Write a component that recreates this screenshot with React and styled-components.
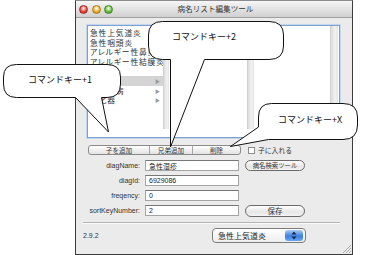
import { Fragment } from 'react';
import styled, { createGlobalStyle } from 'styled-components';

const GlobalStyle = createGlobalStyle`
  html, body {
    margin: 0;
    background: #fff;
  }
  body {
    font-family: "Liberation Sans", "Noto Sans CJK JP", sans-serif;
    color: #222;
  }
`;

const jp = `"Noto Sans CJK JP", "Liberation Sans", sans-serif`;

const Stage = styled.div`
  position: relative;
  width: 371px;
  height: 255px;
  padding-left: 75px;
  box-sizing: border-box;
  overflow: hidden;
`;

const Window = styled.div`
  width: 278px;
  height: 255px;
  box-sizing: border-box;
  border: 1px solid #3c3c3c;
  border-top-color: #8c8c8c;
  background: #ebebeb;
  display: flex;
  flex-direction: column;
`;

const TitleBar = styled.div`
  height: 16px;
  display: grid;
  grid-template-columns: 1fr auto 1fr;
  align-items: center;
  background: linear-gradient(#f6f6f6, #d0d0d0);
  border-bottom: 1px solid #a0a0a0;
  padding-left: 3px;
`;

const Lights = styled.div`
  display: flex;
  gap: 3.5px;
`;

const Light = styled.span`
  width: 9px;
  height: 9px;
  border-radius: 50%;
  box-sizing: border-box;
  border: 1px solid ${p => p.$edge};
  background: radial-gradient(circle at 50% 35%, #fff 0, ${p => p.$color} 55%, ${p => p.$edge} 100%);
`;

const Title = styled.div`
  font-family: ${jp};
  font-size: 7.6px;
  color: #333;
  line-height: 1;
`;

const Body = styled.div`
  flex: 1;
  display: flex;
  flex-direction: column;
  padding: 7px 12px 0 11px;
  position: relative;
`;

const ListBox = styled.div`
  height: 113px;
  box-sizing: border-box;
  border: 1px solid #7d9fcc;
  box-shadow: 0 0 0 1px #c4d7ef;
  background: #fff;
`;

const Columns = styled.div`
  display: flex;
  height: 103px;
`;

const Column = styled.div`
  width: ${p => p.$w}px;
  display: flex;
`;

const ColumnList = styled.div`
  flex: 1;
  min-width: 0;
  padding-top: 2px;
  overflow: hidden;
`;

const Scroller = styled.div`
  width: ${p => p.$w}px;
  background: linear-gradient(90deg, #dcdcdc, #f2f2f2 60%, #e4e4e4);
  border-left: 1px solid #d0d0d0;
`;

const Row = styled.div`
  height: 9.6px;
  display: flex;
  align-items: center;
  justify-content: space-between;
  padding: 0 3px 0 2px;
  font-family: ${jp};
  font-size: 7.8px;
  font-feature-settings: "palt";
  letter-spacing: 0.8px;
  line-height: 9px;
  color: #333;
  white-space: nowrap;
  overflow: hidden;
  background: ${p => (p.$selected ? '#d4d4d4' : 'transparent')};
`;

const Arrow = styled.span`
  font-size: 5px;
  letter-spacing: 0;
  color: #9a9a9a;
`;

const Toolbar = styled.div`
  margin-top: 7px;
  display: flex;
  align-items: center;
  height: 10px;
`;

const Segmented = styled.div`
  display: flex;
  height: 10px;
  box-sizing: border-box;
  border: 1px solid #8a8a8a;
  border-radius: 3px;
  background: linear-gradient(#ffffff, #e2e2e2);
  margin-left: 1px;
`;

const Segment = styled.div`
  width: ${p => p.$w}px;
  display: flex;
  align-items: center;
  justify-content: center;
  font-family: ${jp};
  font-size: 6.6px;
  color: #333;
  & + & {
    border-left: 1px solid #a8a8a8;
  }
`;

const Check = styled.label`
  display: flex;
  align-items: center;
  gap: 3px;
  margin-left: 7px;
  font-family: ${jp};
  font-size: 6.8px;
  color: #333;
`;

const Box = styled.span`
  width: 7px;
  height: 7px;
  box-sizing: border-box;
  border: 1px solid #8c8c8c;
  background: #fff;
`;

const Form = styled.div`
  margin-top: 4px;
  margin-left: -5px;
  display: grid;
  grid-template-columns: 58px 94px 61px;
  grid-auto-rows: 13px;
  column-gap: 5px;
  row-gap: 2px;
  align-items: center;
`;

const Label = styled.div`
  text-align: right;
  font-size: 7px;
  color: #333;
  white-space: nowrap;
`;

const Field = styled.div`
  height: 11px;
  box-sizing: border-box;
  border: 1px solid #a4a4a4;
  border-top-color: #777;
  background: #fff;
  padding-left: 3px;
  display: flex;
  align-items: center;
  font-family: "Liberation Sans", "Noto Sans CJK JP", sans-serif;
  font-size: 7px;
  color: #222;
`;

const Pill = styled.div`
  margin-left: 1px;
  height: ${p => p.$h}px;
  box-sizing: border-box;
  border: 1px solid #6a6a6a;
  border-radius: 7px;
  background: linear-gradient(#ffffff, #e6e6e6 60%, #f4f4f4);
  display: flex;
  align-items: center;
  justify-content: center;
  font-family: ${jp};
  font-size: ${p => p.$fs}px;
  color: #333;
`;

const Separator = styled.div`
  margin: 5px 0 0 -4px;
  height: 0;
  border-top: 1px solid #b4b4b4;
  border-bottom: 1px solid #fafafa;
`;

const Footer = styled.div`
  margin-top: 4px;
  margin-left: -4px;
  display: flex;
  align-items: center;
  height: 15px;
`;

const Version = styled.div`
  font-size: 7px;
  color: #333;
  width: 129px;
`;

const Popup = styled.div`
  width: 94px;
  height: 15px;
  box-sizing: border-box;
  border: 1px solid #7c7c7c;
  border-radius: 4px;
  background: linear-gradient(#ffffff, #ededed);
  display: flex;
  align-items: center;
  overflow: hidden;
`;

const PopupText = styled.div`
  flex: 1;
  padding-left: 5px;
  font-family: ${jp};
  font-size: 8px;
  color: #222;
`;

const Stepper = styled.div`
  width: 18px;
  height: 11px;
  margin-right: 2px;
  border-radius: 3px;
  background: linear-gradient(#a9cdf7, #3b7fe0 55%, #6aa6f0);
  display: flex;
  align-items: center;
  justify-content: center;
`;

const Grip = styled.svg`
  position: absolute;
  right: 1px;
  bottom: 1px;
`;

const Overlay = styled.svg`
  position: absolute;
  inset: 0;
  pointer-events: none;
`;

const Bubble = styled.path`
  fill: #fff;
  stroke: #111;
  stroke-width: 1;
  stroke-linejoin: round;
`;

const CalloutText = styled.div`
  position: absolute;
  left: ${p => p.$x}px;
  top: ${p => p.$y}px;
  font-family: ${jp};
  font-size: 9px;
  line-height: 1;
  color: #111;
  white-space: nowrap;
`;

const column1 = [
  { text: '急性上気道炎' },
  { text: '急性咽頭炎' },
  { text: 'アレルギー性鼻炎' },
  { text: 'アレルギー性結膜炎' },
  { text: '扁桃炎' },
  { text: '感染症', selected: true, arrow: true },
  { text: '循環器病', arrow: true },
  { text: '消化器', arrow: true },
];

const fields = [
  { label: 'diagName:', value: '急性湿疹', button: '病名検索ツール' },
  { label: 'diagId:', value: '6929086' },
  { label: 'freqency:', value: '0' },
  { label: 'sortKeyNumber:', value: '2', button: '保存' },
];

export default function App() {
  return (
    <Stage>
      <GlobalStyle />
      <Window>
        <TitleBar>
          <Lights>
            <Light $color="#e8463f" $edge="#a8281f" />
            <Light $color="#eab22e" $edge="#b27a14" />
            <Light $color="#6cbd3c" $edge="#3c8a1e" />
          </Lights>
          <Title>病名リスト編集ツール</Title>
          <div />
        </TitleBar>
        <Body>
          <ListBox>
            <Columns>
              <Column $w={81}>
                <ColumnList>
                  {column1.map(r => (
                    <Row key={r.text} $selected={r.selected}>
                      <span>{r.text}</span>
                      {r.arrow && <Arrow>▶</Arrow>}
                    </Row>
                  ))}
                </ColumnList>
                <Scroller $w={5} />
              </Column>
              <Column $w={85}>
                <ColumnList />
                <Scroller $w={6} />
              </Column>
              <Column $w={84}>
                <ColumnList />
                <Scroller $w={7} />
              </Column>
            </Columns>
          </ListBox>

          <Toolbar>
            <Segmented>
              <Segment $w={60}>子を追加</Segment>
              <Segment $w={42}>兄弟追加</Segment>
              <Segment $w={47}>削除</Segment>
            </Segmented>
            <Check>
              <Box />
              子に入れる
            </Check>
          </Toolbar>

          <Form>
            {fields.map(f => (
              <Fragment key={f.label}>
                <Label>{f.label}</Label>
                <Field>{f.value}</Field>
                {f.button ? (
                  <Pill $h={f.button === '保存' ? 12 : 11} $fs={f.button === '保存' ? 7.5 : 6.4}>
                    {f.button}
                  </Pill>
                ) : (
                  <div />
                )}
              </Fragment>
            ))}
          </Form>

          <Separator />

          <Footer>
            <Version>2.9.2</Version>
            <Popup>
              <PopupText>急性上気道炎</PopupText>
              <Stepper>
                <svg width="6" height="9" viewBox="0 0 6 9">
                  <path d="M3 0.5 L5.5 3.5 H0.5 Z M3 8.5 L5.5 5.5 H0.5 Z" fill="#1d2a44" />
                </svg>
              </Stepper>
            </Popup>
          </Footer>

          <Grip width="9" height="9" viewBox="0 0 9 9">
            <path d="M1 9 L9 1 M4 9 L9 4 M7 9 L9 7" stroke="#9c9c9c" strokeWidth="0.8" />
          </Grip>
        </Body>
      </Window>

      <Overlay width="371" height="255" viewBox="0 0 371 255">
        <Bubble d="M16.5 64.5 H107 Q120.5 64.5 120.5 77 V84 Q120.5 97.5 107 97.5 H101.5 L108.5 132 L75.5 97.5 H16.5 Q3.5 97.5 3.5 84 V77 Q3.5 64.5 16.5 64.5 Z" />
        <Bubble d="M162.5 21.5 H269 Q283.5 21.5 283.5 35 V46 Q283.5 59.5 269 59.5 H204.5 L170.5 147 L170.5 59.5 H162.5 Q148.5 59.5 148.5 46 V35 Q148.5 21.5 162.5 21.5 Z" />
        <Bubble d="M271.5 103.5 H343 Q357.5 103.5 357.5 117 V125 Q357.5 139.5 343 139.5 H268.5 L230.5 146.5 L258.5 127 V117 Q258.5 103.5 271.5 103.5 Z" />
      </Overlay>
      <CalloutText $x={28} $y={75}>コマンドキー+1</CalloutText>
      <CalloutText $x={172} $y={32}>コマンドキー+2</CalloutText>
      <CalloutText $x={278} $y={115}>コマンドキー+X</CalloutText>
    </Stage>
  );
}
